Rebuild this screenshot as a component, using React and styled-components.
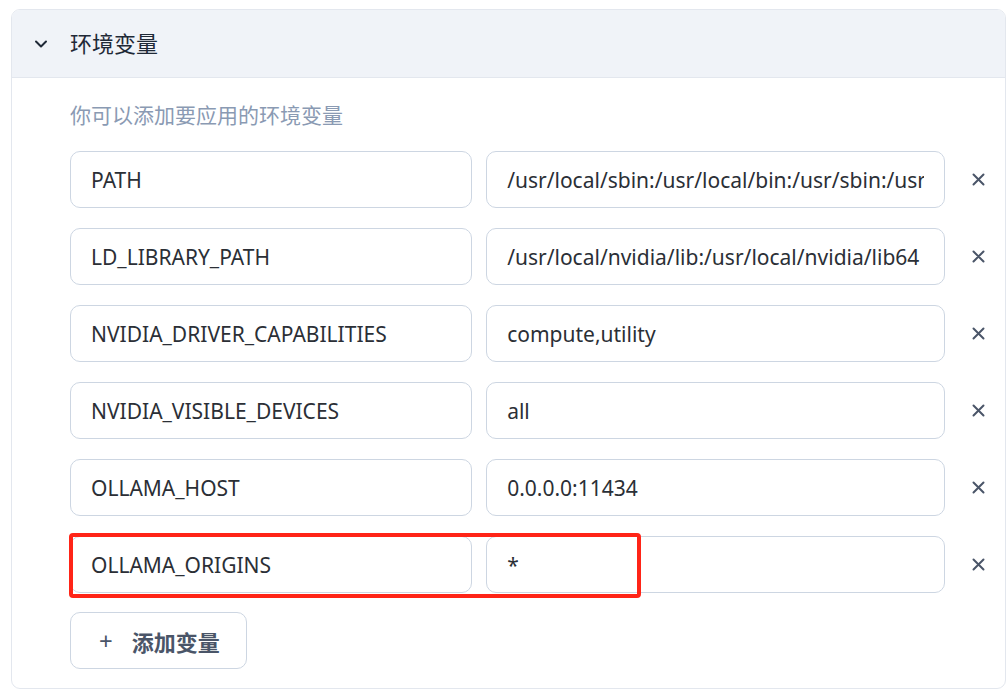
import styled, { createGlobalStyle } from "styled-components";

const GlobalStyle = createGlobalStyle`
  body {
    margin: 0;
    background: #ffffff;
    font-family: "Noto Sans", "Noto Sans CJK SC", sans-serif;
  }
`;

// 折叠面板外框
const Panel = styled.section`
  margin: 9px 1px 0 11px;
  border: 1px solid #e3e7ee;
  border-radius: 9px;
  overflow: hidden;
  background: #ffffff;
`;

const PanelHeader = styled.div`
  height: 68px;
  box-sizing: border-box;
  padding: 0 0 4px 22px;
  display: flex;
  align-items: center;
  background: #f0f3f8;
  border-bottom: 1px solid #e3e7ee;
  gap: 22px;
  color: #1f2937;
  font-size: 22px;
  font-family: "Noto Sans CJK SC", sans-serif;
  & > svg {
    margin-top: 4px;
  }
`;

const PanelBody = styled.div`
  padding: 23px 0 19px 58px;
  display: flex;
  flex-direction: column;
`;

const Hint = styled.p`
  margin: 0 0 24px;
  color: #8a9ab3;
  font-size: 21px;
  line-height: 26px;
  font-family: "Noto Sans CJK SC", sans-serif;
`;

const Rows = styled.div`
  display: flex;
  flex-direction: column;
  gap: 20px;
`;

const Row = styled.div`
  position: relative;
  display: flex;
  align-items: center;
  gap: 14px;
`;

const Field = styled.input`
  box-sizing: border-box;
  width: ${(p) => p.$w}px;
  height: 57px;
  border: 1px solid #cdd6e2;
  border-radius: 10px;
  padding: 0 20px;
  font-family: "Noto Sans", sans-serif;
  font-size: 21px;
  color: #2b2f36;
  background: #ffffff;
  outline: none;
`;

const RemoveBtn = styled.button`
  width: 60px;
  height: 57px;
  border: none;
  background: transparent;
  display: flex;
  align-items: center;
  justify-content: center;
  color: #4a5568;
  padding: 0 0 0 6px;
  margin-left: -14px;
`;

// 截图中的红色标注框
const Highlight = styled.div`
  position: absolute;
  left: -1px;
  top: -3px;
  width: 572px;
  height: 65px;
  box-sizing: border-box;
  border: 4px solid #ff2417;
  border-radius: 4px;
  pointer-events: none;
`;

const AddButton = styled.button`
  margin-top: 19px;
  align-self: flex-start;
  box-sizing: border-box;
  width: 177px;
  height: 57px;
  border: 1px solid #cdd6e2;
  border-radius: 10px;
  background: #ffffff;
  display: flex;
  align-items: center;
  padding-left: 28px;
  gap: 19px;
  color: #4a5568;
  font-family: "Noto Sans CJK SC", sans-serif;
  font-size: 22px;
  font-weight: 700;
  & > .plus {
    font-weight: 400;
    font-size: 24px;
    font-family: "Noto Sans", sans-serif;
  }
`;

const Chevron = () => (
  <svg width="14" height="14" viewBox="0 0 14 14" fill="none">
    <path d="M2 4.5 L7 9.5 L12 4.5" stroke="#1f2937" strokeWidth="2" strokeLinecap="round" strokeLinejoin="round" />
  </svg>
);

const Cross = () => (
  <svg width="13" height="13" viewBox="0 0 13 13" fill="none">
    <path d="M1.5 1.5 L11.5 11.5 M11.5 1.5 L1.5 11.5" stroke="#4a5568" strokeWidth="2" strokeLinecap="round" />
  </svg>
);

const vars = [
  ["PATH", "/usr/local/sbin:/usr/local/bin:/usr/sbin:/usr/bin:/sbin:/bin"],
  ["LD_LIBRARY_PATH", "/usr/local/nvidia/lib:/usr/local/nvidia/lib64"],
  ["NVIDIA_DRIVER_CAPABILITIES", "compute,utility"],
  ["NVIDIA_VISIBLE_DEVICES", "all"],
  ["OLLAMA_HOST", "0.0.0.0:11434"],
  ["OLLAMA_ORIGINS", "*"],
];

const App = () => {
  return (
    <>
      <GlobalStyle />
      <Panel>
        <PanelHeader>
          <Chevron />
          <span>环境变量</span>
        </PanelHeader>
        <PanelBody>
          <Hint>你可以添加要应用的环境变量</Hint>
          <Rows>
            {vars.map(([k, v]) => (
              <Row key={k}>
                <Field $w={403} value={k} readOnly />
                <Field $w={460} value={v} readOnly />
                <RemoveBtn>
                  <Cross />
                </RemoveBtn>
                {k === "OLLAMA_ORIGINS" && <Highlight />}
              </Row>
            ))}
          </Rows>
          <AddButton>
            <span className="plus">+</span>
            <span>添加变量</span>
          </AddButton>
        </PanelBody>
      </Panel>
    </>
  );
};

export default App;
